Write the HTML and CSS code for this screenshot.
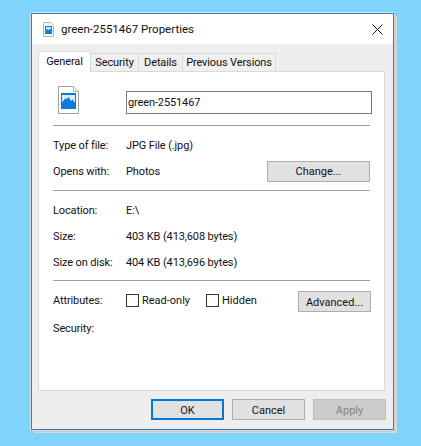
FILE: index.html
```html
<!DOCTYPE html>
<html lang="en">
<head>
<meta charset="utf-8">
<title>green-2551467 Properties</title>
<link rel="stylesheet" href="styles.css">
</head>
<body>
<div class="window">
  <header class="titlebar">
    <svg class="title-icon" width="11" height="15" viewBox="0 0 11 15">
      <path d="M.5.5H7.500L10.500 3.500V14.500H.5Z" fill="#fbfbfb" stroke="#b4b4b4"/>
      <rect x="2" y="4" width="7" height="8" fill="#0a7fdc"/>
      <path d="M3 5H8V8L7 6.500 5.500 8.500 4.500 6.500 3 8.500Z" fill="#cfe8fb"/>
    </svg>
    <span class="title-text">green-2551467 Properties</span>
    <svg class="close-icon" width="11" height="11" viewBox="0 0 11 11">
      <path d="M.5.5L10.500 10.500M10.500.5L.5 10.500" stroke="#111" stroke-width="1" fill="none"/>
    </svg>
  </header>
  <div class="dialog">
    <nav class="tabs">
      <div class="tab tab-active">General</div>
      <div class="tab tab-security">Security</div>
      <div class="tab tab-details">Details</div>
      <div class="tab tab-previous">Previous Versions</div>
    </nav>
    <section class="panel">
      <div class="name-row">
        <svg class="file-icon" width="21" height="28" viewBox="0 0 21 28">
          <path d="M.5.5H15.500L20.500 5.500V27.500H.5Z" fill="#fff" stroke="#a0a0a0"/>
          <path d="M15.500.5V5.500H20.500" fill="#eee" stroke="#b8b8b8"/>
          <rect x="3" y="7" width="15" height="16" fill="#0a7ddb"/>
          <path d="M4 9H17V17L14.500 13.500 13 15 10.500 11 8.500 13.500 7.500 12 4 16.500Z" fill="#d8ecfb"/>
        </svg>
        <input class="name-input" type="text" value="green-2551467">
      </div>
      <hr class="divider divider-first">
      <div class="row row-first"><span class="label">Type of file:</span><span>JPG File (.jpg)</span></div>
      <div class="row"><span class="label">Opens with:</span><span>Photos</span><button class="btn btn-change">Change...</button></div>
      <hr class="divider divider-second">
      <div class="row row-first"><span class="label">Location:</span><span>E:\</span></div>
      <div class="row"><span class="label">Size:</span><span>403 KB (413,608 bytes)</span></div>
      <div class="row"><span class="label">Size on disk:</span><span>404 KB (413,696 bytes)</span></div>
      <hr class="divider divider-third">
      <div class="row row-first">
        <span class="label">Attributes:</span>
        <span class="check check-readonly"><span class="box"></span>Read-only</span>
        <span class="check"><span class="box"></span>Hidden</span>
        <button class="btn btn-advanced">Advanced...</button>
      </div>
      <div class="row row-security"><span class="label">Security:</span></div>
    </section>
    <footer class="actions">
      <button class="btn btn-action btn-default">OK</button>
      <button class="btn btn-action">Cancel</button>
      <button class="btn btn-action btn-disabled">Apply</button>
    </footer>
  </div>
</div>
</body>
</html>
```

FILE: styles.css
```css
* { box-sizing: border-box; }
html, body { height: 100%; }
body {
  margin: 0;
  padding: 13px 0 0 31px;
  background: #80d4fc;
  font-family: Roboto, "Liberation Sans", sans-serif;
  font-size: 11px;
  letter-spacing: -0.12px;
  color: #111;
  overflow: hidden;
}
.window {
  width: 363px;
  height: 417px;
  border: 1px solid #2a80c8;
  background: #eee;
  display: flex;
  flex-direction: column;
  box-shadow: 0 -1px 0 #d8e4ea, -1px 0 0 #d8e4ea, 1px 1px 0 #d4d4d4, 2px 2px 0 #d0d0d0, 3px 3px 0 #d8d8d8;
}
.titlebar {
  height: 30px;
  background: #fff;
  display: flex;
  align-items: center;
  padding: 0 10px 0 11px;
  flex: none;
}
.title-icon { flex: none; }
.title-text { margin-left: 7px; font-size: 11.5px; letter-spacing: 0; }
.close-icon { margin-left: auto; }
.dialog {
  flex: 1;
  display: flex;
  flex-direction: column;
  padding: 7px 8px 0 6px;
}
.tabs {
  display: flex;
  align-items: flex-end;
  height: 20px;
  position: relative;
  z-index: 1;
}
.tab {
  height: 18px;
  line-height: 18px;
  text-align: center;
  white-space: nowrap;
  background: #f0f0f0;
  border: 1px solid #d9d9d9;
  border-bottom: 0;
  margin-left: -1px;
}
.tab:first-child { margin-left: 0; }
.tab-active {
  width: 53px;
  height: 21px;
  line-height: 19px;
  margin-bottom: -1px;
  background: #fff;
  position: relative;
  z-index: 1;
}
.tab-security { width: 49px; }
.tab-details { width: 45px; }
.tab-previous { width: 94px; }
.panel {
  height: 320px;
  flex: none;
  background: #fff;
  border: 1px solid #d9d9d9;
  padding: 14px 14px 0;
}
.name-row {
  display: flex;
  align-items: flex-end;
  height: 28px;
}
.file-icon { margin-left: 5px; flex: none; }
.name-input {
  width: 246px;
  height: 23px;
  margin-left: 47px;
  margin-right: -2px;
  border: 1px solid #7a7a7a;
  border-radius: 0;
  padding: 0 1px;
  font: inherit;
  letter-spacing: inherit;
  color: #111;
  outline: none;
}
.divider {
  border: 0;
  height: 1px;
  margin: 0;
  background: #a0a0a0;
}
.divider-first { margin-top: 11px; }
.divider-second { margin-top: 6px; }
.divider-third { margin-top: 5px; }
.row {
  display: flex;
  align-items: center;
  height: 26px;
}
.row-first { margin-top: 6px; }
.row-security { margin-top: 2px; }
.label { width: 73px; flex: none; }
.btn {
  height: 21px;
  border: 1px solid #adadad;
  border-radius: 0;
  background: #e1e1e1;
  font: inherit;
  color: #111;
  padding: 1px 0 0;
}
.btn-change { width: 103px; margin-left: auto; }
.btn-advanced { width: 73px; margin-left: auto; margin-right: -1px; margin-top: 3px; }
.check { display: flex; align-items: center; letter-spacing: 0; }
.check-readonly { width: 80px; }
.box {
  width: 13px;
  height: 13px;
  border: 1px solid #333;
  margin-right: 3px;
  background: #fff;
}
.actions {
  display: flex;
  justify-content: flex-end;
  gap: 8px;
  margin-top: 8px;
  margin-right: -1px;
}
.btn-action { width: 73px; }
.btn-default { border: 2px solid #0078d7; }
.btn-disabled { background: #ccc; border-color: #bfbfbf; color: #838383; }
```
